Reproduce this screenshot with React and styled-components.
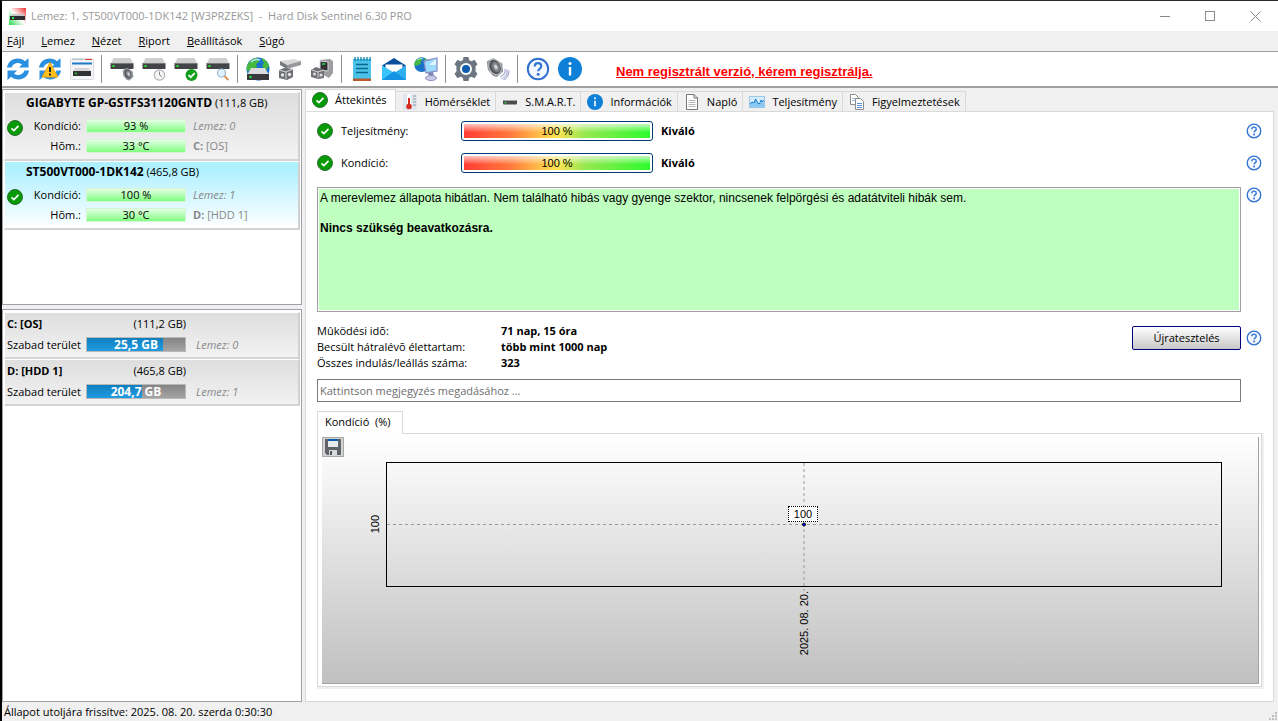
import React, { useState } from "react";
import styled, { createGlobalStyle, css } from "styled-components";

const GlobalStyle = createGlobalStyle`
  * {
    box-sizing: border-box;
  }
  body {
    margin: 0;
    font-family: "Open Sans", "Noto Sans", sans-serif;
    font-size: 11px;
    line-height: 16px;
    color: #000;
  }
  button,
  input {
    font: inherit;
    color: inherit;
    margin: 0;
    padding: 0;
    border: none;
    background: none;
  }
`;

const Window = styled.div`
  display: flex;
  flex-direction: column;
  min-height: 100vh;
  background: #f0f0f0;
  border-left: 2px solid #000;
  border-top: 1px solid #2a282c;
`;

const TitleBar = styled.header`
  display: flex;
  align-items: center;
  height: 30px;
  padding-left: 7px;
  background: #fff;
  color: #999;
`;

const Title = styled.h1`
  flex: 1;
  margin: 0 0 0 5px;
  font-size: 11px;
  font-weight: 400;
  white-space: pre;
`;

const WindowButton = styled.button`
  display: flex;
  align-items: center;
  justify-content: center;
  width: 45px;
  height: 28px;
`;

const MenuBar = styled.nav`
  display: flex;
  gap: 17px;
  height: 20px;
  padding-left: 5px;
`;

const MenuItem = styled.button`
  line-height: 20px;
`;

const Toolbar = styled.div`
  display: flex;
  align-items: center;
  height: 37px;
  background: #fff;
  border-top: 1px solid #a0a0a0;
  border-bottom: 2px solid #a0a0a0;
`;

const ToolButton = styled.button`
  display: flex;
  align-items: center;
  justify-content: center;
  width: 32px;
  height: 32px;
`;

const Separator = styled.span`
  width: 2px;
  height: 28px;
  margin: 0 3px;
  border-left: 1px solid #8c8c8c;
`;

const RegisterLink = styled.a`
  margin-left: 30px;
  padding-top: 6px;
  color: #f00;
  font-family: "Liberation Sans", Arial, sans-serif;
  font-size: 13px;
  font-weight: 700;
`;

const Body = styled.div`
  display: flex;
  flex: 1;
`;

const Sidebar = styled.aside`
  display: flex;
  flex-direction: column;
  gap: 4px;
  width: 300px;
  padding-top: 1px;
`;

const ListPanel = styled.section`
  flex: ${(props) => (props.$fill ? "1" : "0 0 216px")};
  padding: 2px 1px;
  background: #fff;
  border: 1px solid #a0a0a8;
`;

const bevel = css`
  border: 1px solid #fff;
  border-right: 2px solid #d0d0d0;
  border-bottom: 2px solid #d4d4d4;
`;

const DiskItem = styled.div`
  ${bevel}
  height: 69px;
  padding: 1px 0 0 2px;
  background: ${(props) =>
    props.$selected
      ? "linear-gradient(#aff0ff 10%, #fff)"
      : "linear-gradient(#dedede, #f2f2f2)"};
`;

const DiskName = styled.div`
  padding-left: 19px;
  line-height: 18px;

  strong {
    font-size: 12px;
  }
`;

const DiskGrid = styled.div`
  display: grid;
  grid-template-columns: 16px 53px 100px 1fr;
  column-gap: 5px;
  align-items: center;
  padding-top: 4px;
  line-height: 20px;

  & > svg {
    grid-row: span 2;
    align-self: start;
    margin-top: 4px;
  }
`;

const DiskLabel = styled.span`
  text-align: right;
`;

const GreenBar = styled.div`
  height: 14px;
  border: 1px solid #d8f4d8;
  background: linear-gradient(#e4ffe4, #80ff80);
  line-height: 12px;
  text-align: center;
`;

const Muted = styled.span`
  padding-left: 2px;
  color: #888;
  font-style: ${(props) => (props.$italic ? "italic" : "normal")};
`;

const VolumeItem = styled.div`
  ${bevel}
  display: grid;
  grid-template-columns: 74px 100px 1fr;
  column-gap: 5px;
  align-items: center;
  height: 47px;
  padding: 0 0 2px 2px;
  background: linear-gradient(#dedede, #f2f2f2);
  white-space: nowrap;
`;

const VolumeSize = styled.span`
  text-align: right;
`;

const VolumeBar = styled.div`
  display: flex;
  position: relative;
  height: 15px;
  border: 1px solid #b8b8b8;
  background: linear-gradient(#858585, #a4a4a4);
`;

const VolumeFill = styled.div`
  background: linear-gradient(#0d7fc0, #239be0);
`;

const VolumeValue = styled.strong`
  position: absolute;
  inset: 0;
  color: #fff;
  font-size: 12px;
  line-height: 13px;
  text-align: center;
`;

const VolumeDisk = styled(Muted)`
  padding-left: 5px;
`;

const Main = styled.main`
  display: flex;
  flex: 1;
  flex-direction: column;
  min-width: 0;
  padding: 0 4px 0 3px;
`;

const Tabs = styled.div`
  display: flex;
  align-items: flex-end;
  height: 23px;
`;

const Tab = styled.button`
  display: flex;
  align-items: center;
  gap: 7px;
  height: ${(props) => (props.$active ? "23px" : "20px")};
  margin-bottom: ${(props) => (props.$active ? "-1px" : "0")};
  padding: ${(props) => (props.$active ? "0 8px 3px 6px" : "0 5px 0 6px")};
  background: ${(props) => (props.$active ? "#fff" : "#f0f0f0")};
  border: 1px solid #d9d9d9;
  border-left-width: ${(props) => (props.$active ? "1px" : "0")};
  border-bottom: none;
`;

const Page = styled.div`
  display: flex;
  flex: 1;
  flex-direction: column;
  padding: 3px 11px 14px;
  background: #fff;
  border: 1px solid #d9d9d9;
`;

const MeterRow = styled.div`
  display: flex;
  align-items: center;
  height: 32px;
`;

const MeterLabel = styled.span`
  width: 128px;
  padding-left: 8px;
`;

const Meter = styled.div`
  width: 192px;
  height: 20px;
  padding: 2px;
  border: 1px solid #003c74;
  border-radius: 3px;
`;

const MeterFill = styled.div`
  height: 14px;
  background:
    linear-gradient(rgba(255, 255, 255, 0.7), rgba(255, 255, 255, 0) 60%),
    linear-gradient(90deg, #ff3c34, #ff7a3c 25%, #ffe650 50%, #96e850 65%, #2cfc2c);
  font-family: "Liberation Sans", Arial, sans-serif;
  line-height: 14px;
  text-align: center;
`;

const MeterText = styled.strong`
  flex: 1;
  padding-left: 8px;
`;

const HelpButton = styled.button`
  display: flex;
  width: 16px;
  height: 16px;
`;

const WithHelp = styled.div`
  display: flex;
  align-items: flex-start;
  gap: 5px;
`;

const Summary = styled.div`
  flex: 1;
  height: 125px;
  margin-top: 8px;
  padding: 3px 2px;
  background: #bfffbf;
  border: 1px solid #a0a0a0;
  box-shadow: inset 0 0 0 1px #fff;
  font-family: "Liberation Sans", Arial, sans-serif;
  font-size: 12px;
  line-height: 15px;

  p {
    margin: 0 0 15px;
  }
`;

const SummaryHelp = styled(HelpButton)`
  margin-top: 8px;
`;

const Facts = styled.dl`
  display: grid;
  flex: 1;
  grid-template-columns: 184px 1fr;
  margin: 0;

  dd {
    margin: 0;
    font-weight: 700;
  }
`;

const FactsRow = styled(WithHelp)`
  margin-top: 11px;
  align-items: center;
`;

const RetestButton = styled.button`
  width: 109px;
  height: 24px;
  margin-bottom: 18px;
  border: 1px solid #000080;
  border-radius: 2px;
  background: linear-gradient(#fff, #c8c8c8);
`;

const FactsHelp = styled(HelpButton)`
  margin-bottom: 18px;
`;

const Comment = styled.input`
  height: 23px;
  margin: 8px 21px 0 0;
  padding: 0 2px;
  border: 1px solid #7a7a7a;

  &::placeholder {
    color: #6d6d6d;
    opacity: 1;
  }
`;

const ChartTab = styled.button`
  position: relative;
  z-index: 1;
  align-self: flex-start;
  height: 23px;
  margin-top: 9px;
  margin-bottom: -1px;
  padding: 0 11px 2px 7px;
  background: #fff;
  border: 1px solid #d9d9d9;
  border-bottom: none;
  white-space: pre;
`;

const ChartFrame = styled.div`
  display: flex;
  flex: 1;
  padding: 3px 2px 2px 4px;
  border: 1px solid #d9d9d9;
  box-shadow: 1px 1px 0 1px #f0f0f0;
`;

const Chart = styled.figure`
  display: grid;
  flex: 1;
  grid-template-columns: 64px 1fr 36px;
  grid-template-rows: 25px 1fr 96px;
  margin: 0;
  background: linear-gradient(#fff, #c0c0c0);
  border-right: 1px solid #a0a0a0;
  border-bottom: 1px solid #a0a0a0;
  font-family: "Liberation Sans", Arial, sans-serif;
`;

const SaveButton = styled.button`
  display: flex;
  grid-column: 1 / -1;
  align-items: center;
  justify-content: center;
  width: 22px;
  height: 20px;
  background: #d4d4d4;
  border: 1px solid #a8a8a8;
`;

const AxisText = styled.span`
  writing-mode: vertical-rl;
  transform: rotate(180deg);
`;

const ValueAxis = styled.div`
  display: flex;
  align-items: center;
  justify-content: flex-end;
  padding-right: 3px;
`;

const DateAxis = styled.figcaption`
  display: flex;
  grid-column: 2;
  align-items: flex-start;
  justify-content: center;
  padding-top: 4px;
`;

const Plot = styled.div`
  position: relative;
  border: 1px solid #000;

  svg {
    position: absolute;
    width: 100%;
    height: 100%;
    overflow: visible;
  }
`;

const PointLabel = styled.span`
  position: absolute;
  left: calc(50% - 16px);
  top: calc(50% - 19px);
  width: 30px;
  background: #fff;
  border: 1px dotted #000;
  line-height: 14px;
  text-align: center;
`;

const StatusBar = styled.footer`
  display: flex;
  align-items: center;
  justify-content: space-between;
  height: 19px;
  padding: 1px 0 0 2px;

  svg {
    align-self: flex-end;
  }
`;

/* icons */

const Svg = ({ size = 24, box = 24, children }) => (
  <svg width={size} height={size} viewBox={`0 0 ${box} ${box}`} aria-hidden="true">
    {children}
  </svg>
);

const CheckIcon = () => (
  <Svg size={16} box={16}>
    <circle cx="8" cy="8" r="7.5" fill="#069a06" stroke="#2b6e2d" />
    <path d="M4.500 8.300l2.400 2.300 4.600-4.800" fill="none" stroke="#fff" strokeWidth="1.700" />
  </Svg>
);

const HelpIcon = ({ size = 16 }) => (
  <Svg size={size} box={16}>
    <circle cx="8" cy="8" r="6.8" fill="#f4f9ff" stroke="#2f6fd0" strokeWidth="1.300" />
    <path
      d="M5.800 6.300c0-3 4.400-2.900 4.400-.1 0 1.700-2.100 1.700-2.100 3.300"
      fill="none"
      stroke="#3574d6"
      strokeWidth="1.400"
    />
    <circle cx="8.100" cy="11.500" r="1" fill="#3574d6" />
  </Svg>
);

const InfoIcon = ({ size = 24 }) => (
  <Svg size={size}>
    <circle cx="12" cy="12" r="12" fill="#0f80d8" />
    <circle cx="12" cy="6.500" r="1.500" fill="#fff" />
    <path d="M12 10v8.500" stroke="#fff" strokeWidth="2.400" />
  </Svg>
);

const syncArrow =
  "M1 10.500C2 5 6 1.500 11.500 1.500c3 0 5.500 1 7.500 2.800L22.500 1v9.500H13l3-3c-3.800-3-8.800-1.500-10.500 3z";

const SyncIcon = ({ warning }) => (
  <Svg>
    <path d={syncArrow} fill="#2b8fe0" />
    <path d={syncArrow} fill="#2b8fe0" transform="rotate(180 12 12)" />
    {warning && (
      <>
        <path d="M12 5.500L19.800 20H4.200z" fill="#ffc01e" stroke="#f0a800" strokeLinejoin="round" />
        <path d="M12 10v5M12 16.500v2" stroke="#222" strokeWidth="2" />
      </>
    )}
  </Svg>
);

const WindowIcon = () => (
  <Svg>
    <rect x=".5" y="1.500" width="23" height="21" rx="1" fill="#f4f5f7" stroke="#dcdde0" />
    <path d="M2 2.500h12" stroke="#b9c2cc" />
    <path d="M15 2.500h7" stroke="#d8402a" />
    <path d="M2 6.500h20" stroke="#1d79c8" strokeWidth="2" />
    <path d="M5 11h14l2 4H3z" fill="#d6d6d8" />
    <rect x="3" y="14" width="18" height="5" fill="#303236" />
    <circle cx="6" cy="16.500" r="1" fill="#20e030" />
  </Svg>
);

const Drive = () => (
  <>
    <path d="M3.500 1h17l3 6H.500z" fill="#cfcfd0" />
    <rect x=".5" y="6" width="23" height="6" rx=".6" fill="#424448" />
    <path d="M1 6.500h22" stroke="#77797c" />
    <rect x="2.500" y="8" width="2" height="2" fill="#22f030" />
  </>
);

const SpeakerShape = () => (
  <>
    <path d="M1 4l7-4 10 6 1 9-7 6-4-1L2 13z" fill="#8d9095" />
    <ellipse cx="10" cy="10" rx="6.500" ry="9" transform="rotate(-25 10 10)" fill="#55585d" stroke="#c3c5c9" />
    <ellipse cx="11" cy="10" rx="4" ry="6" transform="rotate(-25 11 10)" fill="#7d8086" />
    <ellipse cx="11" cy="10" rx="1.800" ry="3" transform="rotate(-25 11 10)" fill="#d0d2d5" />
  </>
);

const DriveSoundIcon = () => (
  <Svg>
    <Drive />
    <g transform="translate(12 11) scale(.6)">
      <SpeakerShape />
    </g>
  </Svg>
);

const DriveClockIcon = () => (
  <Svg>
    <Drive />
    <circle cx="17.500" cy="18" r="5.200" fill="#f6f6f6" stroke="#b2b2b2" strokeWidth="1.200" />
    <path d="M17.500 14.500V18l2.500 1.500" fill="none" stroke="#888" />
  </Svg>
);

const DriveCheckIcon = () => (
  <Svg>
    <Drive />
    <circle cx="17.500" cy="18" r="6" fill="#12a01c" />
    <path d="M14.500 18l2.300 2.200 4-4.200" fill="none" stroke="#fff" strokeWidth="1.700" />
  </Svg>
);

const DriveSearchIcon = () => (
  <Svg>
    <Drive />
    <circle cx="15.500" cy="16" r="4" fill="#dff0ff" stroke="#9cb5cc" strokeWidth="1.200" />
    <path d="M18.500 19l3.800 4" stroke="#d9965a" strokeWidth="2" />
  </Svg>
);

const Globe = () => (
  <>
    <circle cx="12" cy="12" r="11.500" fill="#1b72ca" />
    <path d="M2 7c2-4 6-6 9-6l2 4-3 2 1 3-5 3-5 1c-.5-3 0-5 1-7zM15 1c4 1 7 4 8 8l-3 4-4-4 2-3z" fill="#45ba3c" />
    <path d="M5 5c3-3 7-3 9-2" stroke="#b8ecff" strokeWidth="1.500" fill="none" />
  </>
);

const GlobeDriveIcon = () => (
  <Svg>
    <Globe />
    <path d="M5 11h14l4 7H1z" fill="#dcdcde" />
    <rect x="1" y="17" width="22" height="6" fill="#37393c" />
    <circle cx="4.500" cy="20" r="1.200" fill="#22f030" />
  </Svg>
);

const PlugDriveIcon = () => (
  <Svg>
    <path d="M2 4l14-2 7 2-14 4z" fill="#d8d8da" />
    <path d="M2 4l7 4v4L2 8z" fill="#77797d" />
    <path d="M9 8l14-4v4L9 12z" fill="#96989c" />
    <path d="M1 13l5-2 9 1v8l-6 3-8-2z" fill="#6d6f73" />
    <path d="M1 13l7 2 7-3M8 15v7" stroke="#d9dadd" fill="none" />
    <circle cx="4.500" cy="18" r="1.700" fill="#e5e5e8" />
    <circle cx="11.500" cy="17.500" r="1.700" fill="#e5e5e8" />
  </Svg>
);

const PlugMonitorIcon = () => (
  <Svg>
    <path d="M10 3l10-1 3 2v12l-4 5-9-5z" fill="#9b9da1" />
    <path d="M10 4l8 1v9l-8-1z" fill="#303236" stroke="#d4d5d8" />
    <rect x="12" y="6" width="3" height="2" fill="#27b53c" />
    <path d="M1 13l5-3 8 3v8l-6 1-7-2z" fill="#6f7175" />
    <path d="M2 13l6 2 6-2M8 15v6" stroke="#d2d3d6" fill="none" />
    <circle cx="4.500" cy="17" r="1.500" fill="#e0e0e2" />
    <circle cx="11" cy="18" r="1.600" fill="#e0e0e2" />
  </Svg>
);

const NotepadIcon = () => (
  <Svg>
    <rect x="3" y="2" width="18" height="21" fill="#4cc2e8" />
    <rect x="3" y="21.500" width="18" height="2.500" fill="#b85a2a" />
    <path d="M5 0v4M8 0v4M11 0v4M14 0v4M17 0v4M20 0v4" stroke="#0f7ea8" strokeWidth="1.300" />
    <path d="M6 7.500h12M6 11.500h12M6 15.500h12" stroke="#08698f" strokeWidth="1.500" />
  </Svg>
);

const MailIcon = () => (
  <Svg>
    <path d="M0 8.500L12 1l12 7.500-12 8z" fill="#0a4f9c" />
    <path d="M3.500 7.500h17v5L12 17l-8.500-4.500z" fill="#fff" />
    <path d="M0 8.500L12 16l12-7.500V23H0z" fill="#2fb0ee" />
    <path d="M0 23L12 16 0 8.500z" fill="#38c4fa" />
    <path d="M0 23l12-9 12 9z" fill="#1592e2" />
  </Svg>
);

const GlobeMonitorIcon = () => (
  <Svg>
    <g transform="scale(.64)">
      <Globe />
    </g>
    <path d="M10 4l13-3v13l-11 2z" fill="#9cdcff" stroke="#8a92c8" strokeWidth="1.300" />
    <path d="M15 8l7-6v6z" fill="#dff6ff" />
    <path d="M14 16l5-1 1 4h-5z" fill="#7d82b8" />
    <ellipse cx="17" cy="21" rx="5.500" ry="2.500" fill="#c7c9e6" stroke="#8f93c4" />
  </Svg>
);

const GearIcon = () => (
  <Svg>
    <path
      d="M9.500 0h5l.700 3.300 2.300 1L20.500 2.800l3 4.500-2.100 2.400.3 2.300-.3 2.300 2.100 2.400-3 4.500-3-1.500-2.300 1-.7 3.300h-5l-.7-3.300-2.300-1-3 1.500-3-4.500 2.100-2.400L2.300 12l.3-2.300L.5 7.300l3-4.500 3 1.500 2.300-1z"
      fill="#6c7680"
    />
    <circle cx="12" cy="12" r="6" fill="#fff" />
    <circle cx="12" cy="12" r="4" fill="#0f5cae" />
  </Svg>
);

const SpeakerIcon = () => (
  <Svg>
    <g transform="translate(0 1) scale(.9)">
      <SpeakerShape />
    </g>
    <path
      d="M19 12c1 3-1 6-5 8M21 12.500c1 4-1.500 7.500-5.500 9.500M23 13.500c0 4-2 7.500-5.500 9.500"
      fill="none"
      stroke="#a9abcf"
      strokeWidth="1.200"
    />
  </Svg>
);

const ThermometerIcon = () => (
  <Svg size={16} box={16}>
    <rect x="1" y="0" width="14" height="16" fill="#dfe6ee" />
    <path d="M11 2h3M11 5h3M11 8h3M11 11h3" stroke="#8b98a8" />
    <path d="M7 2v9" stroke="#fff" strokeWidth="4" strokeLinecap="round" />
    <path d="M7 4v8" stroke="#cf2a1c" strokeWidth="2" />
    <circle cx="7" cy="12.500" r="2.800" fill="#d42c1e" />
  </Svg>
);

const SmartIcon = () => (
  <Svg size={16} box={16}>
    <rect x="1" y="6" width="14" height="4.500" rx="1" fill="#4a4c50" />
    <path d="M1.500 6.500h13" stroke="#a3a5a8" />
    <circle cx="3.500" cy="8.700" r=".9" fill="#2be038" />
  </Svg>
);

const DocumentIcon = () => (
  <Svg size={16} box={16}>
    <path d="M2.500.5h7.500l3.500 3.500v11.500h-11z" fill="#fff" stroke="#777" />
    <path d="M10 .5V4h3.500" fill="none" stroke="#777" />
    <path d="M4.500 6.500h7M4.500 8.500h7M4.500 10.500h7M4.500 12.500h7" stroke="#b4b4b4" />
  </Svg>
);

const GraphIcon = () => (
  <Svg size={16} box={16}>
    <rect x=".5" y="2.500" width="15" height="11" fill="#d4ecfc" stroke="#9cc8e6" />
    <path d="M1 10l2-2 2 1 2-5 2 5 2 1 2-4 2 3v4H1z" fill="#8cc8f4" />
    <path d="M1 10l2-2 2 1 1.500-4L8.500 9l2 1L12 6l1.500 2 1.500-2" fill="none" stroke="#1c7cc8" />
  </Svg>
);

const CopyIcon = () => (
  <Svg size={16} box={16}>
    <path d="M1.500.5h5l2.500 2.500v7.500h-7.500z" fill="#fff" stroke="#8c8c8c" />
    <path d="M3 4.500h4M3 6.500h4" stroke="#9cb8e0" />
    <path d="M6.500 4.500h5l3 3v8h-8z" fill="#fff" stroke="#8c8c8c" />
    <path d="M8 9.500h5M8 11.500h5M8 13.500h5" stroke="#5a90dc" />
  </Svg>
);

const FloppyIcon = () => (
  <Svg size={16} box={16}>
    <path d="M0 0h16v16H2l-2-2z" fill="#606468" />
    <rect x="3" y="0" width="10" height="8" fill="#e8ebee" />
    <rect x="3" y="0" width="10" height="2" fill="#0c5cb0" />
    <rect x="4" y="11" width="8" height="5" fill="#d8dadd" />
    <rect x="5" y="12" width="2" height="4" fill="#505458" />
  </Svg>
);

const AppIcon = () => (
  <Svg size={17} box={17}>
    <defs>
      <linearGradient id="appBg" x1="0" y1="1" x2="1" y2="0">
        <stop offset="0" stopColor="#28d848" />
        <stop offset=".5" stopColor="#fff" />
        <stop offset="1" stopColor="#f02c2c" />
      </linearGradient>
    </defs>
    <rect width="17" height="17" fill="url(#appBg)" />
    <path d="M3 6h11l2 3H1z" fill="#c8c8c8" />
    <rect x="1" y="8" width="15" height="4" fill="#2c2e30" />
    <rect x="3" y="9" width="2" height="2" fill="#30f040" />
  </Svg>
);

const GripIcon = () => (
  <svg width="9" height="9" viewBox="0 0 9 9" aria-hidden="true">
    <path d="M6 0h2v2H6zM3 3h2v2H3zM6 3h2v2H6zM0 6h2v2H0zM3 6h2v2H3zM6 6h2v2H6z" fill="#bfbfbf" />
  </svg>
);

/* data */

const menu = ["Fájl", "Lemez", "Nézet", "Riport", "Beállítások", "Súgó"];

const toolGroups = [
  [
    ["Frissítés", <SyncIcon />],
    ["Figyelmeztetés", <SyncIcon warning />],
    ["Ablak", <WindowIcon />],
  ],
  [
    ["Hang", <DriveSoundIcon />],
    ["Rövid teszt", <DriveClockIcon />],
    ["Teszt", <DriveCheckIcon />],
    ["Keresés", <DriveSearchIcon />],
  ],
  [
    ["Online", <GlobeDriveIcon />],
    ["Csatlakozás", <PlugDriveIcon />],
    ["Leválasztás", <PlugMonitorIcon />],
  ],
  [
    ["Riport", <NotepadIcon />],
    ["Levél", <MailIcon />],
    ["Hálózat", <GlobeMonitorIcon />],
  ],
  [
    ["Beállítások", <GearIcon />],
    ["Hangok", <SpeakerIcon />],
  ],
  [
    ["Súgó", <HelpIcon size={24} />],
    ["Névjegy", <InfoIcon />],
  ],
];

const disks = [
  { name: "GIGABYTE GP-GSTFS31120GNTD", size: "111,8 GB", health: 93, temp: 33, letter: "C:", label: "[OS]" },
  { name: "ST500VT000-1DK142", size: "465,8 GB", health: 100, temp: 30, letter: "D:", label: "[HDD 1]" },
];

const volumes = [
  { name: "C: [OS]", total: 111.2, free: 25.5 },
  { name: "D: [HDD 1]", total: 465.8, free: 204.7 },
];

const tabs = [
  ["Áttekintés", <CheckIcon />],
  ["Hõmérséklet", <ThermometerIcon />],
  ["S.M.A.R.T.", <SmartIcon />],
  ["Információk", <InfoIcon size={16} />],
  ["Napló", <DocumentIcon />],
  ["Teljesítmény", <GraphIcon />],
  ["Figyelmeztetések", <CopyIcon />],
];

const formatGb = (value) => `${value.toFixed(1).replace(".", ",")} GB`;

const Overview = () => {
  const [comment, setComment] = useState("");

  return (
    <Page>
      {["Teljesítmény:", "Kondíció:"].map((label) => (
        <MeterRow key={label}>
          <CheckIcon />
          <MeterLabel>{label}</MeterLabel>
          <Meter>
            <MeterFill>100 %</MeterFill>
          </Meter>
          <MeterText>Kiváló</MeterText>
          <HelpButton aria-label="Súgó">
            <HelpIcon />
          </HelpButton>
        </MeterRow>
      ))}

      <WithHelp>
        <Summary>
          <p>
            A merevlemez állapota hibátlan. Nem található hibás vagy gyenge szektor, nincsenek
            felpörgési és adatátviteli hibák sem.
          </p>
          <strong>Nincs szükség beavatkozásra.</strong>
        </Summary>
        <SummaryHelp aria-label="Súgó">
          <HelpIcon />
        </SummaryHelp>
      </WithHelp>

      <FactsRow>
        <Facts>
          <dt>Mûködési idõ:</dt>
          <dd>71 nap, 15 óra</dd>
          <dt>Becsült hátralévõ élettartam:</dt>
          <dd>több mint 1000 nap</dd>
          <dt>Összes indulás/leállás száma:</dt>
          <dd>323</dd>
        </Facts>
        <RetestButton>Újratesztelés</RetestButton>
        <FactsHelp aria-label="Súgó">
          <HelpIcon />
        </FactsHelp>
      </FactsRow>

      <Comment
        type="text"
        aria-label="Megjegyzés"
        placeholder="Kattintson megjegyzés megadásához ..."
        value={comment}
        onChange={(evt) => setComment(evt.target.value)}
      />

      <ChartTab>{"Kondíció  (%)"}</ChartTab>
      <ChartFrame>
        <Chart>
          <SaveButton aria-label="Mentés">
            <FloppyIcon />
          </SaveButton>
          <ValueAxis>
            <AxisText>100</AxisText>
          </ValueAxis>
          <Plot>
            <svg aria-hidden="true">
              <line x1="0" y1="50%" x2="100%" y2="50%" stroke="#999" strokeDasharray="3 3" />
              <line x1="50%" y1="0" x2="50%" y2="104%" stroke="#999" strokeDasharray="3 3" />
              <circle cx="50%" cy="50%" r="1.500" fill="#0000ff" stroke="#000" />
            </svg>
            <PointLabel>100</PointLabel>
          </Plot>
          <DateAxis>
            <AxisText>2025. 08. 20.</AxisText>
          </DateAxis>
        </Chart>
      </ChartFrame>
    </Page>
  );
};

const App = () => {
  const [selected, setSelected] = useState(1);

  return (
    <Window>
      <GlobalStyle />
      <TitleBar>
        <AppIcon />
        <Title>{"Lemez: 1, ST500VT000-1DK142 [W3PRZEKS]  -  Hard Disk Sentinel 6.30 PRO"}</Title>
        <WindowButton aria-label="Kis méret">
          <Svg size={11} box={11}>
            <path d="M0 5.500h10" stroke="#888" />
          </Svg>
        </WindowButton>
        <WindowButton aria-label="Teljes méret">
          <Svg size={11} box={11}>
            <rect x=".5" y=".5" width="9" height="9" fill="none" stroke="#888" />
          </Svg>
        </WindowButton>
        <WindowButton aria-label="Bezárás">
          <Svg size={11} box={11}>
            <path d="M.5.5l10 10M10.500.5l-10 10" stroke="#888" />
          </Svg>
        </WindowButton>
      </TitleBar>

      <MenuBar>
        {menu.map((item) => (
          <MenuItem key={item}>
            <u>{item[0]}</u>
            {item.slice(1)}
          </MenuItem>
        ))}
      </MenuBar>

      <Toolbar>
        {toolGroups.map((group, index) => (
          <React.Fragment key={index}>
            {index > 0 && <Separator />}
            {group.map(([label, icon]) => (
              <ToolButton key={label} aria-label={label}>
                {icon}
              </ToolButton>
            ))}
          </React.Fragment>
        ))}
        <RegisterLink href="#register">Nem regisztrált verzió, kérem regisztrálja.</RegisterLink>
      </Toolbar>

      <Body>
        <Sidebar>
          <ListPanel>
            {disks.map((disk, index) => (
              <DiskItem
                key={disk.name}
                $selected={index === selected}
                onClick={() => setSelected(index)}
              >
                <DiskName>
                  <strong>{disk.name}</strong> ({disk.size})
                </DiskName>
                <DiskGrid>
                  <CheckIcon />
                  <DiskLabel>Kondíció:</DiskLabel>
                  <GreenBar>{disk.health} %</GreenBar>
                  <Muted $italic>Lemez: {index}</Muted>
                  <DiskLabel>Hõm.:</DiskLabel>
                  <GreenBar>{disk.temp} °C</GreenBar>
                  <Muted>
                    <strong>{disk.letter}</strong> {disk.label}
                  </Muted>
                </DiskGrid>
              </DiskItem>
            ))}
          </ListPanel>
          <ListPanel $fill>
            {volumes.map((volume, index) => (
              <VolumeItem key={volume.name}>
                <strong>{volume.name}</strong>
                <VolumeSize>({formatGb(volume.total)})</VolumeSize>
                <span />
                <span>Szabad terület</span>
                <VolumeBar>
                  <VolumeFill style={{ width: `${100 - (volume.free / volume.total) * 100}%` }} />
                  <VolumeValue>{formatGb(volume.free)}</VolumeValue>
                </VolumeBar>
                <VolumeDisk $italic>Lemez: {index}</VolumeDisk>
              </VolumeItem>
            ))}
          </ListPanel>
        </Sidebar>

        <Main>
          <Tabs>
            {tabs.map(([label, icon], index) => (
              <Tab key={label} $active={index === 0}>
                {icon}
                {label}
              </Tab>
            ))}
          </Tabs>
          <Overview />
        </Main>
      </Body>

      <StatusBar>
        <span>Állapot utoljára frissítve: 2025. 08. 20. szerda 0:30:30</span>
        <GripIcon />
      </StatusBar>
    </Window>
  );
};

export default App;
